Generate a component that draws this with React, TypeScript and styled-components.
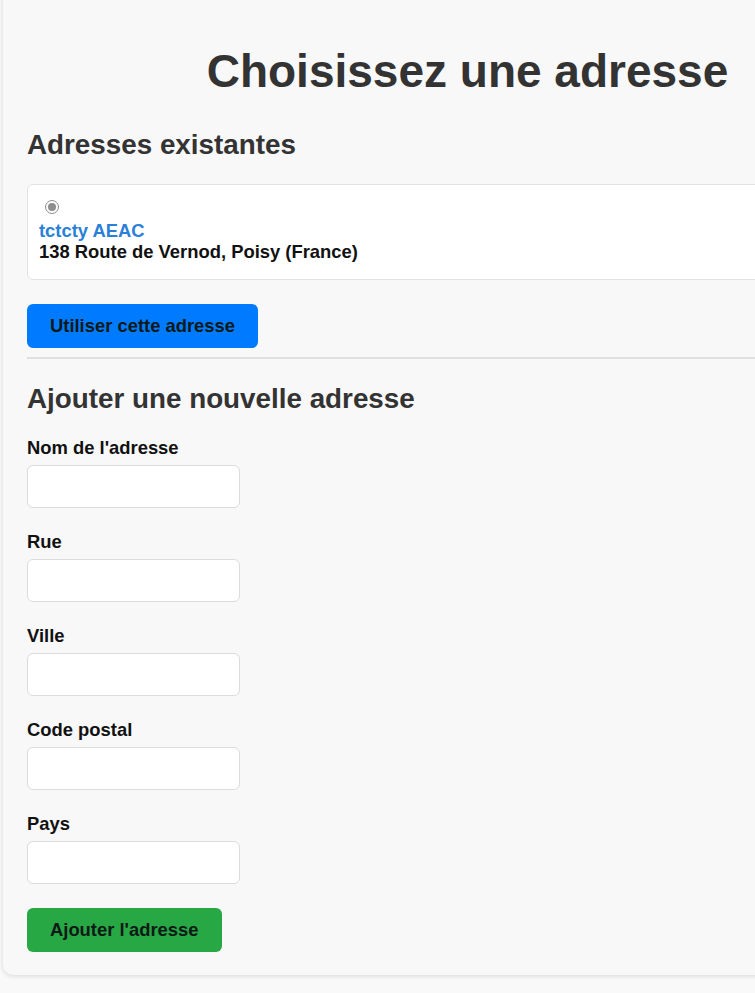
import styled, { createGlobalStyle } from 'styled-components';

const GlobalStyle = createGlobalStyle`
	html, body {
		margin: 0;
		padding: 0;
		background: #f9f9f9;
		font-family: 'Liberation Sans', Arial, sans-serif;
	}
	body {
		overflow: hidden;
	}
	* {
		box-sizing: border-box;
	}
`;

const fields = ["Nom de l'adresse", 'Rue', 'Ville', 'Code postal', 'Pays'];

function App() {
	return (
		<>
			<GlobalStyle />
			<Viewport>
				<Card>
					<Title>Choisissez une adresse</Title>

					<SectionTitle $top={32}>Adresses existantes</SectionTitle>
					<AddressCard>
						<Radio type='radio' name='address' defaultChecked />
						<AddressName>tctcty AEAC</AddressName>
						<AddressLine>138 Route de Vernod, Poisy (France)</AddressLine>
					</AddressCard>
					<ActionButton $variant='primary' type='button'>
						Utiliser cette adresse
					</ActionButton>

					<Divider />

					<SectionTitle $top={24}>Ajouter une nouvelle adresse</SectionTitle>
					<Form onSubmit={(e) => e.preventDefault()}>
						{fields.map((label) => (
							<Field key={label}>
								<Label>{label}</Label>
								<Input type='text' />
							</Field>
						))}
						<ActionButton $variant='success' type='submit'>
							Ajouter l'adresse
						</ActionButton>
					</Form>
				</Card>
			</Viewport>
		</>
	);
}

const Viewport = styled.div`
	width: 100%;
	overflow: hidden;
	padding-left: 3px;
	padding-bottom: 20px;
`;

const Card = styled.div`
	width: 929px;
	margin-top: -12px;
	padding: 12px 24px 23px;
	background: #f8f8f8;
	border-radius: 10px;
	box-shadow: 0 1px 5px rgba(0, 0, 0, 0.14);
`;

const Title = styled.h1`
	margin: 46px 0 0;
	font-size: 46px;
	line-height: 51px;
	font-weight: 700;
	color: #333;
	text-align: center;
`;

const SectionTitle = styled.h2<{ $top: number }>`
	margin: ${(p) => p.$top}px 0 0;
	font-size: 27.8px;
	line-height: 32px;
	font-weight: 700;
	color: #333;
`;

const AddressCard = styled.label`
	display: block;
	margin-top: 23px;
	padding: 11px 11px 17px;
	background: #fff;
	border: 1px solid #e2e2e2;
	border-radius: 6px;
	font-size: 18.4px;
	line-height: 21px;
	font-weight: 700;
`;

const Radio = styled.input`
	appearance: none;
	display: block;
	width: 14px;
	height: 14px;
	margin: 4px 0 6px 6px;
	border: 1.5px solid #8d8d8d;
	border-radius: 50%;
	background: #fff;
	position: relative;

	&:checked::after {
		content: '';
		position: absolute;
		inset: 2px;
		border-radius: 50%;
		background: #8d8d8d;
	}
`;

const AddressName = styled.div`
	color: #2a7fd8;
`;

const AddressLine = styled.div`
	color: #111;
`;

const ActionButton = styled.button<{ $variant: 'primary' | 'success' }>`
	display: block;
	margin-top: 24px;
	height: 44px;
	padding: 0 23px;
	border: none;
	border-radius: 6px;
	background: ${(p) => (p.$variant === 'primary' ? '#007bff' : '#28a745')};
	color: #0d1a16;
	font-family: inherit;
	font-size: 18.4px;
	font-weight: 700;
	cursor: pointer;
`;

const Divider = styled.hr`
	margin: 9px 0 0;
	border: none;
	border-top: 2px solid #e0e0e0;
`;

const Form = styled.form`
	display: flex;
	flex-direction: column;
	align-items: flex-start;
	margin-top: 22px;
`;

const Field = styled.div`
	display: flex;
	flex-direction: column;
	gap: 7px;
	margin-bottom: 23px;

	&:last-of-type {
		margin-bottom: 0;
	}
`;

const Label = styled.label`
	font-size: 18.4px;
	line-height: 21px;
	font-weight: 700;
	color: #111;
`;

const Input = styled.input`
	width: 213px;
	height: 43px;
	padding: 0 10px;
	background: #fff;
	border: 1px solid #dcdcdc;
	border-radius: 6px;
	font-family: inherit;
	font-size: 18px;
`;

export default App;
